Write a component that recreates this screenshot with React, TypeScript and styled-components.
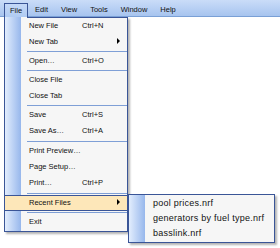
import * as React from 'react';
import styled, { createGlobalStyle } from 'styled-components';

const colors = {
  navy: '#3a5597',
  menuBg: '#f6f6f6',
  separator: '#7f9fd6',
  highlight: '#fde7b9',
  barTop: '#cadcf8',
  barBottom: '#a7c4ef',
  barLine: '#7aa0d6',
};

const GlobalStyle = createGlobalStyle`
  html, body {
    margin: 0;
    padding: 0;
    background: #ffffff;
  }
  body {
    font-family: "Liberation Sans", Arial, sans-serif;
    color: #111;
  }
`;

const Screen = styled.div`
  position: relative;
  width: 280px;
  height: 248px;
  overflow: hidden;
  background: #ffffff;
`;

const MenuBar = styled.div`
  display: flex;
  align-items: flex-end;
  gap: 1px;
  height: 16px;
  padding-left: 4px;
  background: linear-gradient(to bottom, ${colors.barTop}, ${colors.barBottom});
  border-bottom: 1px solid ${colors.barLine};
  font-size: 7.5px;
`;

const BarItem = styled.div<{ $open?: boolean }>`
  position: relative;
  z-index: 2;
  display: flex;
  align-items: center;
  box-sizing: border-box;
  height: ${({ $open }) => ($open ? '14px' : '13px')};
  margin-bottom: ${({ $open }) => ($open ? '-1px' : '0')};
  padding: 0 ${({ $open }) => ($open ? '5px' : '6px')} 1px;
  border: ${({ $open }) => ($open ? `1px solid ${colors.navy}` : 'none')};
  border-bottom: none;
  background: ${({ $open }) =>
    $open ? `linear-gradient(to bottom, #c3d8f8, #b0cbf2)` : 'transparent'};
`;

const Dropdown = styled.div`
  position: absolute;
  z-index: 1;
  top: 17px;
  left: 4px;
  width: 122px;
  padding: 1px 0 1px;
  border: 1px solid ${colors.navy};
  border-top: none;
  box-shadow: 2px 2px 2px rgba(0, 0, 0, 0.3);
  background:
    linear-gradient(to right, #e2edfd, #97b7ec) 0 0 / 16px 100% no-repeat,
    ${colors.menuBg};
  font-size: 7.5px;

  &::before {
    content: '';
    position: absolute;
    top: 0;
    left: 22px;
    right: 0;
    height: 1px;
    background: ${colors.navy};
  }
`;

const Item = styled.div<{ $active?: boolean }>`
  display: grid;
  grid-template-columns: 53px 1fr 14px;
  align-items: center;
  box-sizing: border-box;
  height: 16px;
  padding-left: 24px;
  padding-bottom: 2px;
  border: 1px solid ${({ $active }) => ($active ? colors.navy : 'transparent')};
  border-left-width: 0;
  border-right-width: 0;
  background: ${({ $active }) => ($active ? colors.highlight : 'transparent')};
  white-space: nowrap;
`;

const Shortcut = styled.span``;

const Arrow = styled.span`
  width: 0;
  height: 0;
  margin-left: 4px;
  border-left: 3px solid #000;
  border-top: 3px solid transparent;
  border-bottom: 3px solid transparent;
`;

const Separator = styled.div<{ $h: number }>`
  display: flex;
  align-items: center;
  height: ${({ $h }) => $h}px;
  padding-left: 22px;

  &::after {
    content: '';
    flex: 1;
    height: 1px;
    background: ${colors.separator};
  }
`;

const Submenu = styled.div`
  position: absolute;
  z-index: 3;
  top: 194px;
  left: 128px;
  width: 145px;
  padding: 1px 0;
  border: 1px solid ${colors.navy};
  box-shadow: 2px 2px 2px rgba(0, 0, 0, 0.3);
  background:
    linear-gradient(to right, #e2edfd, #97b7ec) 0 0 / 16px 100% no-repeat,
    ${colors.menuBg};
  font-size: 9px;
  letter-spacing: 0.25px;
`;

const SubItem = styled.div`
  display: flex;
  align-items: center;
  height: 15px;
  padding-left: 24px;
  padding-bottom: 1px;
  box-sizing: border-box;
  white-space: nowrap;
`;

type Entry =
  | { kind: 'item'; label: string; shortcut?: string; sub?: boolean; active?: boolean }
  | { kind: 'sep'; h: number };

const fileMenu: Entry[] = [
  { kind: 'item', label: 'New File', shortcut: 'Ctrl+N' },
  { kind: 'item', label: 'New Tab', sub: true },
  { kind: 'sep', h: 3 },
  { kind: 'item', label: 'Open…', shortcut: 'Ctrl+O' },
  { kind: 'sep', h: 3 },
  { kind: 'item', label: 'Close File' },
  { kind: 'item', label: 'Close Tab' },
  { kind: 'sep', h: 3 },
  { kind: 'item', label: 'Save', shortcut: 'Ctrl+S' },
  { kind: 'item', label: 'Save As…', shortcut: 'Ctrl+A' },
  { kind: 'sep', h: 4 },
  { kind: 'item', label: 'Print Preview…' },
  { kind: 'item', label: 'Page Setup…' },
  { kind: 'item', label: 'Print…', shortcut: 'Ctrl+P' },
  { kind: 'sep', h: 4 },
  { kind: 'item', label: 'Recent Files', sub: true, active: true },
  { kind: 'sep', h: 3 },
  { kind: 'item', label: 'Exit' },
];

const menuNames = ['File', 'Edit', 'View', 'Tools', 'Window', 'Help'];
const recentFiles = ['pool prices.nrf', 'generators by fuel type.nrf', 'basslink.nrf'];

export default function App() {
  return (
    <Screen>
      <GlobalStyle />
      <MenuBar>
        {menuNames.map((name, i) => (
          <BarItem key={name} $open={i === 0}>
            {name}
          </BarItem>
        ))}
      </MenuBar>
      <Dropdown>
        {fileMenu.map((entry, i) =>
          entry.kind === 'sep' ? (
            <Separator key={i} $h={entry.h} />
          ) : (
            <Item key={i} $active={entry.active}>
              <span>{entry.label}</span>
              <Shortcut>{entry.shortcut}</Shortcut>
              {entry.sub ? <Arrow /> : <span />}
            </Item>
          )
        )}
      </Dropdown>
      <Submenu>
        {recentFiles.map((f) => (
          <SubItem key={f}>{f}</SubItem>
        ))}
      </Submenu>
    </Screen>
  );
}
